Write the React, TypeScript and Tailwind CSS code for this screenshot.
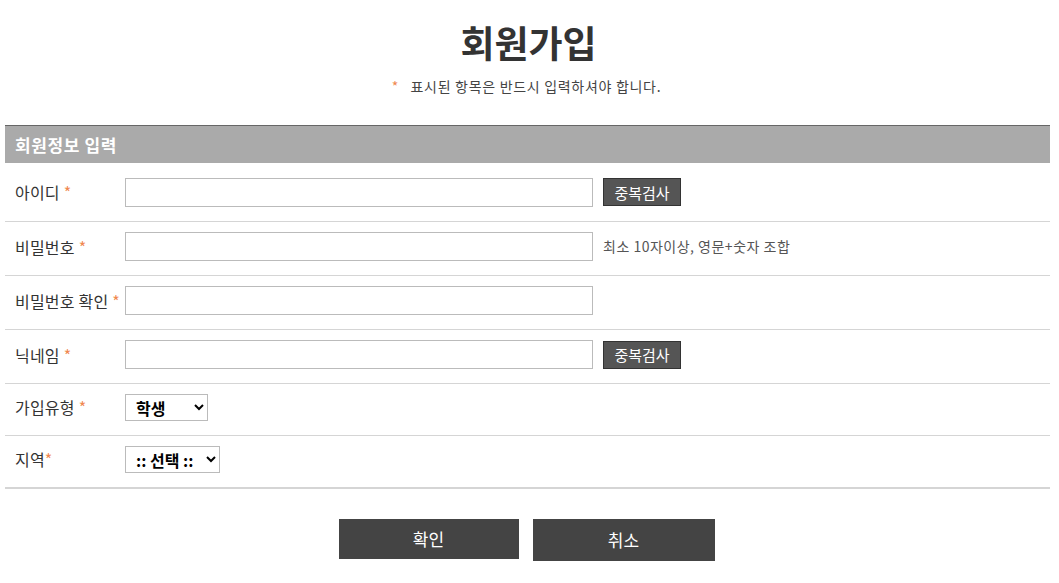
import React from "react";

const font = { fontFamily: '"Noto Sans CJK KR", "Noto Sans", sans-serif' };

function Star({ tight }: { tight?: boolean }) {
  return <span className={`text-[#f0884f] ${tight ? "" : "ml-[4px]"}`}>*</span>;
}

function Row({ label, tight, h, children }: { label: string; tight?: boolean; h: string; children?: React.ReactNode }) {
  return (
    <div className={`flex items-center border-b border-[#d5d5d5] ${h}`}>
      <div className="w-[120px] pl-[10px] text-[16px] tracking-[0.2px] text-[#333] whitespace-nowrap">
        {label}
        <Star tight={tight} />
      </div>
      <div className="flex items-center">{children}</div>
    </div>
  );
}

function TextInput({ type = "text" }: { type?: string }) {
  return <input type={type} className="w-[468px] h-[29px] border border-[#bbb] bg-white outline-none" />;
}

function DupBtn() {
  return (
    <button className="ml-[10px] w-[78px] h-[28px] bg-[#555] border border-[#333] text-white text-[15px] leading-none">
      중복검사
    </button>
  );
}

export default function App() {
  return (
    <div className="w-[1059px] h-[583px] bg-white overflow-hidden" style={font}>
      <div className="pt-[18px] text-center">
        <h1 className="text-[37px] font-bold text-[#333] leading-[48px] ml-[-2px]">회원가입</h1>
        <p className="mt-[10px] text-[14px] tracking-[0.7px] text-[#444] leading-[20px] ml-[-6px]">
          <span className="text-[#f0884f]">*</span>&nbsp;&nbsp; 표시된 항목은 반드시 입력하셔야 합니다.
        </p>
      </div>
      <div className="ml-[5px] w-[1045px] mt-[29px]">
        <div className="h-[38px] bg-[#aaa] border-t border-[#666] flex items-center pl-[10px] text-white font-bold text-[17px] tracking-[0.6px]">
          회원정보 입력
        </div>
        <Row label="아이디" h="h-[59px]">
          <TextInput />
          <DupBtn />
        </Row>
        <Row label="비밀번호" h="h-[54px] pb-[4px]">
          <TextInput type="password" />
          <span className="ml-[10px] text-[14px] tracking-[0.5px] text-[#555]">최소 10자이상, 영문+숫자 조합</span>
        </Row>
        <Row label="비밀번호 확인" h="h-[54px] pb-[4px]">
          <TextInput type="password" />
        </Row>
        <Row label="닉네임" h="h-[54px] pb-[4px]">
          <TextInput />
          <DupBtn />
        </Row>
        <Row label="가입유형" h="h-[52px] pb-[5px]">
          <select className="w-[83px] h-[27px] border border-[#bbb] bg-white text-[16px] font-bold text-black pl-[6px]">
            <option>학생</option>
          </select>
        </Row>
        <div className="flex items-center border-b-2 border-[#d5d5d5] h-[53px] pb-[5px]">
          <div className="w-[120px] pl-[10px] text-[16px] tracking-[0.2px] text-[#333]">
            지역<Star tight />
          </div>
          <select className="w-[95px] h-[27px] border border-[#bbb] bg-white text-[16px] font-bold text-black pl-[6px]">
            <option>:: 선택 ::</option>
          </select>
        </div>
      </div>
      <div className="flex justify-center items-start gap-[14px] mt-[30px] ml-[-6px]">
        <button className="w-[180px] h-[40px] bg-[#444] text-white text-[17px]">확인</button>
        <button className="w-[182px] h-[42px] bg-[#444] text-white text-[17px]">취소</button>
      </div>
    </div>
  );
}
